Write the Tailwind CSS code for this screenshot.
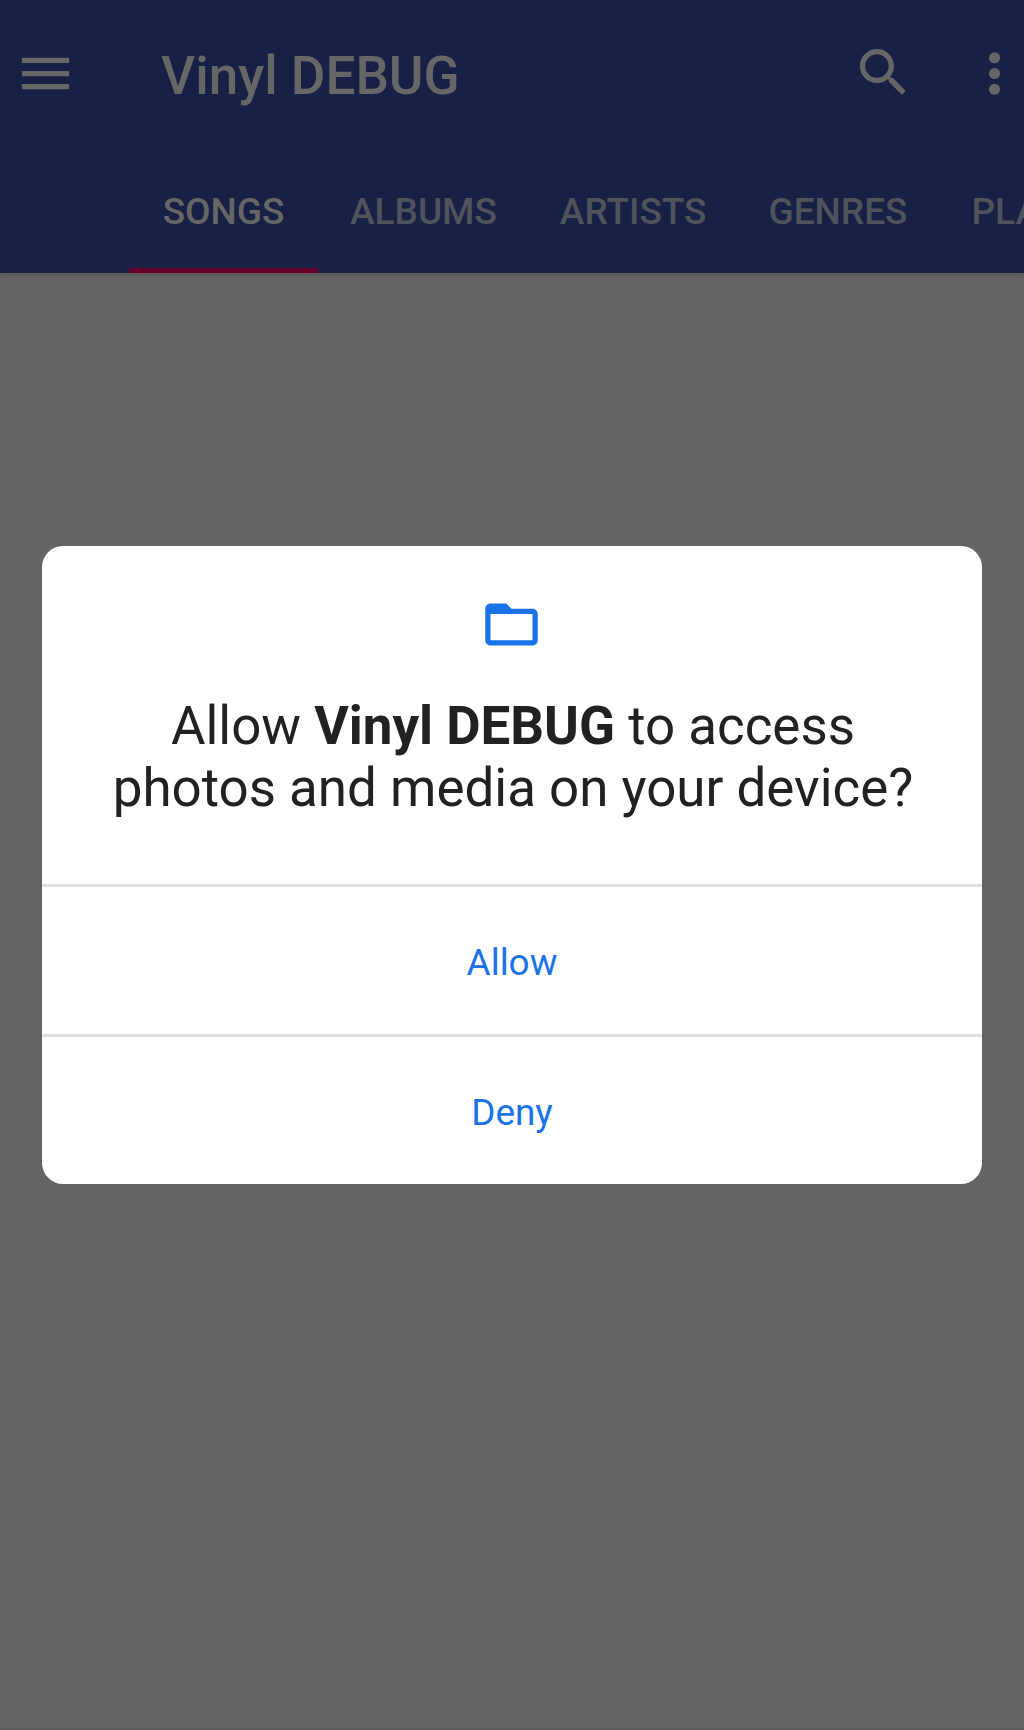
<!DOCTYPE html>
<html lang="en">
<head>
<meta charset="utf-8">
<title>Vinyl DEBUG</title>
<script src="https://cdn.jsdelivr.net/npm/@tailwindcss/browser@4"></script>
</head>
<body class="relative h-[1730px] w-[1024px] overflow-hidden bg-[#646464] font-['Roboto',sans-serif]">
<header class="relative flex h-[273px] flex-col bg-[#192046] shadow-[0_2px_8px_rgba(0,0,0,0.14)]">
  <div class="flex h-[147px] items-center pl-[14px] text-[#666666]">
    <svg class="size-[63px] shrink-0" viewBox="0 0 24 24" fill="currentColor"><path d="M3 18h18v-2H3v2zm0-5h18v-2H3v2zm0-7v2h18V6H3z"/></svg>
    <h1 class="ml-[84px] grow pt-[4px] text-[53px] leading-[62px] font-medium whitespace-nowrap">Vinyl DEBUG</h1>
    <svg class="mb-[2px] size-[63px] shrink-0" viewBox="0 0 24 24" fill="currentColor"><path d="M15.5 14h-.79l-.28-.27C15.41 12.59 16 11.11 16 9.5 16 5.91 13.09 3 9.5 3S3 5.91 3 9.5 5.91 16 9.5 16c1.61 0 3.09-.59 4.23-1.57l.27.28v.79l5 4.99L20.49 19l-4.99-5zm-6 0C7.01 14 5 11.99 5 9.5S7.01 5 9.5 5 14 7.01 14 9.5 11.99 14 9.5 14z"/></svg>
    <svg class="-mr-[2px] ml-[48px] size-[63px] shrink-0" viewBox="0 0 24 24" fill="currentColor"><circle cx="12" cy="6" r="2.1"/><circle cx="12" cy="12" r="2.1"/><circle cx="12" cy="18" r="2.1"/></svg>
  </div>
  <nav class="flex h-[126px] overflow-hidden pl-[129px] text-[37px] leading-[43px] font-medium whitespace-nowrap text-[#50525c]">
    <div class="flex w-[189px] shrink-0 items-center justify-center border-b-[5px] border-[#66002b] pt-[8px] text-[#666666]">SONGS</div>
    <div class="flex shrink-0 items-center pr-[31px] pl-[32px] pt-[3px]">ALBUMS</div>
    <div class="flex shrink-0 items-center pr-[31px] pl-[32px] pt-[3px]">ARTISTS</div>
    <div class="flex shrink-0 items-center pr-[32px] pl-[31px] pt-[3px]">GENRES</div>
    <div class="flex shrink-0 items-center px-[32px] pt-[3px]">PLAYLISTS</div>
  </nav>
</header>
<div class="absolute inset-0 flex flex-col items-center border-b-2 border-[#5c5a5a] pt-[546px]">
  <section role="dialog" class="flex h-[638px] w-[940px] flex-col overflow-hidden rounded-[21px] bg-white">
    <div class="flex h-[338px] flex-col items-center pt-[47px]">
      <svg class="mr-[2px] size-[63px]" viewBox="0 0 24 24" fill="#1a73e8"><path d="M20 6h-8l-2-2H4c-1.1 0-1.99.9-1.99 2L2 18c0 1.1.9 2 2 2h16c1.1 0 2-.9 2-2V8c0-1.1-.9-2-2-2zm0 12H4V8h16v10z"/></svg>
      <p class="mt-[39px] pl-[2px] text-center text-[52.9px] leading-[62px] whitespace-nowrap text-[#212121]">Allow <b class="font-bold">Vinyl DEBUG</b> to access<br>photos and media on your device?</p>
    </div>
    <button class="h-[150px] border-t-3 border-[#e0e0e0] pt-[4px] text-[36.9px] text-[#1a73e8]">Allow</button>
    <button class="h-[150px] border-t-3 border-[#e0e0e0] pt-[4px] text-[36.9px] text-[#1a73e8]">Deny</button>
  </section>
</div>
</body>
</html>
